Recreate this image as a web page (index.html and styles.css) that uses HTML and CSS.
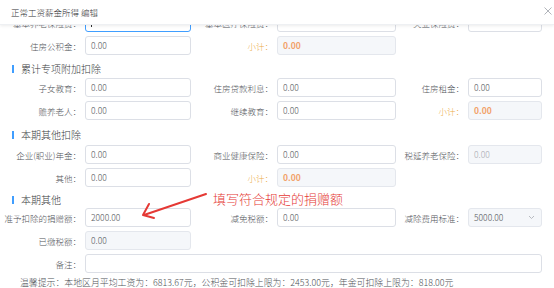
FILE: index.html
```html
<!DOCTYPE html>
<html lang="zh-CN">
<head>
  <meta charset="UTF-8" /><meta name="viewport" content="width=device-width,initial-scale=1" />
  <title>正常工资薪金所得 编辑</title>
  <link rel="stylesheet" href="styles.css">
</head>
<body>
  <div class="dialog">
    <!-- Header -->
    <div class="dialog-header">
      <span class="dialog-title">正常工资薪金所得 编辑</span>
      <svg class="close-icon" width="8" height="8" viewBox="0 0 8 8"><path d="M0.5 0.5L7.5 7.5M7.5 0.5L0.5 7.5" stroke="#a8abb2" stroke-width="0.9" fill="none"/></svg>
    </div>

    <!-- Body -->
    <div class="dialog-body">
      <div class="form">
        <div class="row">
          <label class="lbl">基本养老保险费：</label>
          <div class="inp focus"><span class="caret"></span></div>
          <label class="lbl">基本医疗保险费：</label>
          <div class="inp"></div>
          <label class="lbl">失业保险费：</label>
          <div class="inp"></div>
        </div>
        <div class="row">
          <label class="lbl">住房公积金：</label>
          <div class="inp">0.00</div>
          <label class="lbl sub">小计：</label>
          <div class="inp grey total">0.00</div>
        </div>

        <div class="sec-title">累计专项附加扣除</div>
        <div class="row">
          <label class="lbl">子女教育：</label>
          <div class="inp">0.00</div>
          <label class="lbl">住房贷款利息：</label>
          <div class="inp">0.00</div>
          <label class="lbl">住房租金：</label>
          <div class="inp">0.00</div>
        </div>
        <div class="row">
          <label class="lbl">赡养老人：</label>
          <div class="inp">0.00</div>
          <label class="lbl">继续教育：</label>
          <div class="inp">0.00</div>
          <label class="lbl sub">小计：</label>
          <div class="inp grey total">0.00</div>
        </div>

        <div class="sec-title sec-2">本期其他扣除</div>
        <div class="row">
          <label class="lbl">企业(职业)年金：</label>
          <div class="inp">0.00</div>
          <label class="lbl">商业健康保险：</label>
          <div class="inp">0.00</div>
          <label class="lbl">税延养老保险：</label>
          <div class="inp grey disabled">0.00</div>
        </div>
        <div class="row">
          <label class="lbl">其他：</label>
          <div class="inp">0.00</div>
          <label class="lbl sub">小计：</label>
          <div class="inp grey total">0.00</div>
        </div>

        <div class="sec-title sec-3">本期其他</div>
        <div class="row">
          <label class="lbl">准予扣除的捐赠额：</label>
          <div class="inp">2000.00</div>
          <label class="lbl">减免税额：</label>
          <div class="inp">0.00</div>
          <label class="lbl">减除费用标准：</label>
          <div class="inp grey select">5000.00
            <svg width="7" height="5" viewBox="0 0 7 5"><path d="M1 1L3.5 3.5L6 1" stroke="#a8abb2" stroke-width="0.8" fill="none"/></svg>
          </div>
        </div>
        <div class="row">
          <label class="lbl">已缴税额：</label>
          <div class="inp grey">0.00</div>
        </div>
        <div class="row">
          <label class="lbl">备注：</label>
          <div class="inp wide"></div>
        </div>

        <p class="hint">温馨提示：本地区月平均工资为：6813.67元，公积金可扣除上限为：2453.00元，年金可扣除上限为：818.00元</p>
      </div>
    </div>

    <!-- Annotation -->
    <svg class="note-arrow" width="70" height="28" viewBox="0 0 70 28">
      <path d="M67 2L5 23" stroke="#e53935" stroke-width="2" fill="none" stroke-linecap="round"/>
      <path d="M10 12L4 23L15 26" stroke="#e53935" stroke-width="2" fill="none" stroke-linecap="round" stroke-linejoin="round"/>
    </svg>
    <span class="note-text">填写符合规定的捐赠额</span>
  </div>
</body>
</html>
```

FILE: styles.css
```css
/* Reset & fonts */
*, *::before, *::after { margin:0; padding:0; box-sizing:border-box; }
body {
  font-family: "Noto Sans CJK SC", "Liberation Sans", sans-serif;
  font-weight:300;
  background:#fff; color:#606266; width:554px; height:288px; overflow:hidden;
}

.dialog { position:relative; width:554px; height:288px; }

/* Header */
.dialog-header {
  position:relative; z-index:1; height:25px; background:#fff;
  display:flex; align-items:center; justify-content:space-between;
  padding:0 2px 0 11px;
  box-shadow:0 1px 3px rgba(0,0,0,0.08); border-bottom:1px solid #eef0f3;
}
.dialog-title { font-size:8.5px; color:#303133; }
.close-icon { margin-top:-2px; }

/* Body */
.dialog-body { height:263px; overflow:hidden; }
.form { margin-top:-12px; display:flex; flex-direction:column; }

.row {
  display:grid; grid-template-columns:85px 106px 86px 119px 72px 74px;
  height:19px; margin-bottom:4px; align-items:center;
}
.lbl {
  font-size:8.5px; text-align:right; padding-right:4px;
  color:#505358; white-space:nowrap;
}
.lbl.sub { color:#ecab45; }

.inp {
  height:19px; border:1px solid #dcdfe6; border-radius:3px;
  padding:0 5px; font-size:8.5px; line-height:17px; color:#55585d;
  display:flex; align-items:center;
}
.inp.focus { border-color:#409eff; }
.caret { width:1px; height:9px; background:#303133; }
.inp.grey { background:#f5f7fa; border-color:#e4e7ed; }
.inp.total { color:#f2a26a; font-weight:600; }
.inp.disabled { color:#a8abb2; }
.inp.select { justify-content:space-between; color:#55585d; padding-right:6px; }
.inp.wide { grid-column:2 / 7; }

/* Section titles */
.sec-title {
  height:23px; padding:7px 0 0 21px; position:relative;
  font-size:10px; line-height:14px; color:#3a3c40;
  margin-top:-4px;
}
.sec-title::before {
  content:""; position:absolute; left:12px; top:10px;
  width:2px; height:8px; background:#409eff;
}
.sec-2 { height:25px; padding-top:8px; }
.sec-2::before { top:11px; }
.sec-3 { height:21px; padding-top:6px; }
.sec-3::before { top:9px; }

.hint {
  font-size:8.9px; line-height:12px; margin-top:-4px; padding:4px 0 0 20px;
  color:#505358; white-space:nowrap;
}

/* Annotation over the form */
.note-arrow { position:absolute; left:139px; top:192px; }
.note-text {
  position:absolute; left:213px; top:190px;
  font-size:13px; line-height:18px; color:#e53935; white-space:nowrap;
}
```
